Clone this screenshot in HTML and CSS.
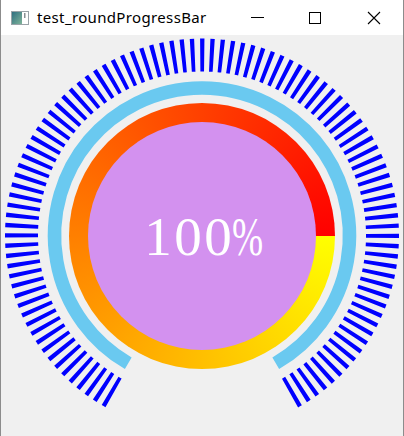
FILE: index.html
```html
<!DOCTYPE html>
<html>
<head>
<meta charset="utf-8">
<link rel="stylesheet" href="styles.css">
</head>
<body>
<div class="window">
  <div class="titlebar">
    <svg class="app-icon" width="18" height="14" viewBox="0 0 18 14">
      <defs>
        <linearGradient id="ig" x1="0" y1="0" x2="1" y2="1">
          <stop offset="0" stop-color="#2f6f80"/>
          <stop offset="1" stop-color="#7fb49a"/>
        </linearGradient>
      </defs>
      <rect x="0.5" y="0.5" width="17" height="13" fill="#fff" stroke="#9aa3a8"/>
      <rect x="1" y="1" width="10" height="12" fill="url(#ig)"/>
      <rect x="13" y="2" width="1.5" height="5" fill="#8a8f93"/>
    </svg>
    <span class="title">test_roundProgressBar</span>
    <div class="controls">
      <svg class="ctl" width="46" height="34" viewBox="0 0 46 34">
        <line x1="17" y1="16.5" x2="30" y2="16.5" stroke="#000" stroke-width="1"/>
      </svg>
      <svg class="ctl" width="46" height="34" viewBox="0 0 46 34">
        <rect x="17.5" y="11.5" width="11" height="11" fill="none" stroke="#000" stroke-width="1"/>
      </svg>
      <svg class="ctl" width="46" height="34" viewBox="0 0 46 34">
        <path d="M18 11 L30 23 M30 11 L18 23" stroke="#000" stroke-width="1.1" fill="none"/>
      </svg>
    </div>
  </div>
  <div class="content">
    <div class="stage">
      <svg class="dial" width="402" height="401" viewBox="-201 -200.5 402 401">
        <path class="ticks" d="M -86.127 158.626 A 180.5 180.5 0 1 1 86.127 158.626"/>
        <path class="track" d="M -73.75 127.739 A 147.5 147.5 0 1 1 73.75 127.739"/>
      </svg>
      <div class="ring">
        <div class="disc"><span class="value">100<span class="pct">%</span></span></div>
      </div>
    </div>
  </div>
</div>
</body>
</html>
```
FILE: styles.css
```css
html, body {
  margin: 0;
  padding: 0;
  background: #f0f0f0;
}
.window {
  width: 402px;
  height: 436px;
  border-left: 1px solid #8c8c8c;
  border-right: 1px solid #8c8c8c;
  display: flex;
  flex-direction: column;
}
.titlebar {
  height: 35px;
  background: #ffffff;
  display: flex;
  align-items: center;
  flex: none;
}
.app-icon {
  margin-left: 10px;
  margin-top: 1px;
  flex: none;
}
.title {
  margin-left: 8px;
  font-family: "Noto Sans", "Liberation Sans", sans-serif;
  font-size: 15px;
  letter-spacing: 0.35px;
  color: #000;
  margin-top: -1px;
}
.controls {
  margin-left: auto;
  display: flex;
  margin-right: 1px;
}
.ctl {
  display: block;
  width: 58px;
  height: 34px;
}
.content {
  flex: 1;
  background: #f0f0f0;
  display: flex;
  justify-content: center;
}
.stage {
  width: 402px;
  height: 401px;
  display: grid;
}
.dial {
  grid-area: 1 / 1;
  display: block;
}
.ticks {
  fill: none;
  stroke: #0000ff;
  stroke-width: 33;
  stroke-dasharray: 4 5.4509;
  stroke-dashoffset: 6.7254;
}
.track {
  fill: none;
  stroke: #6ac9f0;
  stroke-width: 13.5;
}
.ring {
  grid-area: 1 / 1;
  place-self: center;
  width: 266px;
  height: 266px;
  border-radius: 50%;
  background: conic-gradient(from 90deg, #ffff00, #ff0000);
  display: flex;
  align-items: center;
  justify-content: center;
}
.disc {
  width: 228px;
  height: 228px;
  border-radius: 50%;
  background: #d391ef;
  display: flex;
  align-items: center;
  justify-content: center;
}
.value {
  font-family: "Liberation Serif", "DejaVu Serif", serif;
  font-size: 55px;
  color: #ffffff;
  letter-spacing: 2.5px;
  margin-top: 2px;
  margin-left: 3px;
  white-space: nowrap;
}
.pct {
  display: inline-block;
  letter-spacing: 0;
  transform: scaleX(0.68);
  transform-origin: left center;
  margin-left: -2.5px;
  margin-right: -15px;
}
```
